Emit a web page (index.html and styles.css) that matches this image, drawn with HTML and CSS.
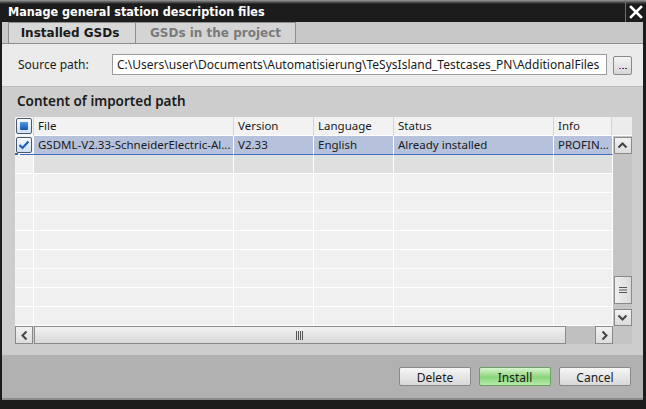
FILE: index.html
```html
<!DOCTYPE html>
<html>
<head>
<meta charset="utf-8">
<link rel="stylesheet" href="styles.css">
</head>
<body>
<div class="window">
  <div class="titlebar">
    <div class="title">Manage general station description files</div>
    <div class="close">
      <svg width="14" height="14" viewBox="0 0 14 14"><path d="M2 2L12 12M12 2L2 12" stroke="#fff" stroke-width="2.6" stroke-linecap="square"/></svg>
    </div>
  </div>
  <div class="body">
    <div class="tabs">
      <div class="tab active">Installed GSDs</div>
      <div class="tab">GSDs in the project</div>
    </div>
    <div class="source">
      <span class="label">Source path:</span>
      <div class="input">C:\Users\user\Documents\Automatisierung\TeSysIsland_Testcases_PN\AdditionalFiles</div>
      <div class="browse"><span class="dots"><i class="d1"></i><i class="d2"></i><i class="d3"></i></span></div>
    </div>
    <div class="panel">
      <div class="heading">Content of imported path</div>
      <div class="table">
        <div class="header">
          <div class="hcell cb">
            <svg class="check" width="16" height="16" viewBox="0 0 16 16">
              <defs><linearGradient id="bg1" x1="0" y1="0" x2="0" y2="1"><stop offset="0" stop-color="#f8fbff"/><stop offset="1" stop-color="#d0def0"/></linearGradient>
              <linearGradient id="fill1" x1="0" y1="0" x2="0" y2="1"><stop offset="0" stop-color="#4a9ae8"/><stop offset="1" stop-color="#1a56a8"/></linearGradient></defs>
              <rect x="0.5" y="0.5" width="15" height="15" rx="1.5" fill="url(#bg1)" stroke="#4a5a74"/>
              <rect x="4" y="4" width="8" height="8" rx="1" fill="url(#fill1)"/>
            </svg>
          </div>
          <div class="hcell">File</div>
          <div class="hcell">Version</div>
          <div class="hcell">Language</div>
          <div class="hcell">Status</div>
          <div class="hcell">Info</div>
          <div class="hcell last"></div>
        </div>
        <div class="main">
          <div class="rows">
            <div class="row selected">
              <div class="cell cb">
                <svg class="check" width="16" height="16" viewBox="0 0 16 16">
                  <rect x="0.5" y="0.5" width="15" height="15" rx="1.5" fill="url(#bg1)" stroke="#4a5a74"/>
                  <path d="M3.5 8L6.5 11L12.5 4.5" fill="none" stroke="#1f5fb8" stroke-width="2.2"/>
                </svg>
                <span class="focus"></span>
              </div>
              <div class="cell">GSDML-V2.33-SchneiderElectric-Al...</div>
              <div class="cell">V2.33</div>
              <div class="cell">English</div>
              <div class="cell">Already installed</div>
              <div class="cell">PROFIN...</div>
            </div>
            <div class="row dim"><div class="cell cb"></div><div class="cell"></div><div class="cell"></div><div class="cell"></div><div class="cell"></div><div class="cell"></div></div>
            <div class="row"><div class="cell cb"></div><div class="cell"></div><div class="cell"></div><div class="cell"></div><div class="cell"></div><div class="cell"></div></div>
            <div class="row"><div class="cell cb"></div><div class="cell"></div><div class="cell"></div><div class="cell"></div><div class="cell"></div><div class="cell"></div></div>
            <div class="row"><div class="cell cb"></div><div class="cell"></div><div class="cell"></div><div class="cell"></div><div class="cell"></div><div class="cell"></div></div>
            <div class="row"><div class="cell cb"></div><div class="cell"></div><div class="cell"></div><div class="cell"></div><div class="cell"></div><div class="cell"></div></div>
            <div class="row"><div class="cell cb"></div><div class="cell"></div><div class="cell"></div><div class="cell"></div><div class="cell"></div><div class="cell"></div></div>
            <div class="row"><div class="cell cb"></div><div class="cell"></div><div class="cell"></div><div class="cell"></div><div class="cell"></div><div class="cell"></div></div>
            <div class="row"><div class="cell cb"></div><div class="cell"></div><div class="cell"></div><div class="cell"></div><div class="cell"></div><div class="cell"></div></div>
            <div class="row"><div class="cell cb"></div><div class="cell"></div><div class="cell"></div><div class="cell"></div><div class="cell"></div><div class="cell"></div></div>
          </div>
          <div class="vscroll">
            <div class="sbtn up"><svg width="11" height="7" viewBox="0 0 11 7"><path d="M1.5 5.5L5.5 1.5L9.5 5.5" fill="none" stroke="#444" stroke-width="2"/></svg></div>
            <div class="vtrack"></div>
            <div class="vthumb"><svg width="10" height="8" viewBox="0 0 10 8"><path d="M1 1.5H9M1 4H9M1 6.5H9" stroke="#555" stroke-width="1"/></svg></div>
            <div class="vgap"></div>
            <div class="sbtn down"><svg width="11" height="7" viewBox="0 0 11 7"><path d="M1.5 1.5L5.5 5.5L9.5 1.5" fill="none" stroke="#444" stroke-width="2"/></svg></div>
          </div>
        </div>
        <div class="hscrollrow">
          <div class="hbtn"><svg width="7" height="11" viewBox="0 0 7 11"><path d="M5.5 1.5L1.5 5.5L5.5 9.5" fill="none" stroke="#444" stroke-width="2"/></svg></div>
          <div class="hthumb"><svg width="8" height="9" viewBox="0 0 8 9" shape-rendering="crispEdges"><path d="M0.5 0V9M2.5 0V9M4.5 0V9M6.5 0V9" stroke="#555" stroke-width="1"/></svg></div>
          <div class="htrack"></div>
          <div class="hbtn"><svg width="7" height="11" viewBox="0 0 7 11"><path d="M1.5 1.5L5.5 5.5L1.5 9.5" fill="none" stroke="#444" stroke-width="2"/></svg></div>
          <div class="corner"></div>
        </div>
      </div>
    </div>
    <div class="footer">
      <div class="btn">Delete</div>
      <div class="btn green">Install</div>
      <div class="btn">Cancel</div>
    </div>
  </div>
</div>
</body>
</html>
```
FILE: styles.css
```css
* { box-sizing: border-box; }
html, body { margin: 0; padding: 0; }
body { width: 646px; height: 409px; overflow: hidden; background: #1c1c1c; }
.window {
  width: 646px; height: 409px; background: #1c1c1c;
  display: flex; flex-direction: column;
  font-family: "Noto Sans", "Open Sans", sans-serif; font-size: 12px; color: #1a1a1a;
}
.titlebar {
  height: 22px; display: flex; align-items: stretch;
  background: linear-gradient(#9a9a9a 0px, #5a5a5a 2px, #1c1c1c 4px, #1c1c1c 100%);
}
.title {
  flex: 1; color: #fff; font-family: "DejaVu Sans Condensed", "DejaVu Sans", sans-serif; font-weight: bold; font-size: 12.5px;
  padding: 4px 0 0 8px;
}
.close {
  width: 21px; border-left: 1px solid #707070; display: flex; align-items: center; justify-content: center;
  padding-top: 2px;
}
.body {
  flex: 1; margin: 0 3px 9px 2px; display: flex; flex-direction: column;
  border-bottom: 2px solid #8c8c8c;
}
.tabs {
  height: 22px; background: #c8c8c8; display: flex; padding-left: 6px;
  border-bottom: 1px solid #8e8e8e;
}
.tab {
  height: 21px; padding: 3px 0 0 0; text-align: center;
  font-family: "DejaVu Sans", sans-serif; font-weight: bold; font-size: 12px; color: #7a7a7a;
  background: #d4d4d4; border: 1px solid #8e8e8e; border-bottom: none; border-left: none; width: 160px;
}
.tab.active {
  width: 128px; color: #1a1a1a; background: #d8d8d8; border-left: 1px solid #8e8e8e; padding-right: 4px;
}
.source {
  height: 42px; background: #ebebeb; display: flex; align-items: center; padding-left: 16px;
}
.label { width: 94px; margin-top: -2px; }
.input {
  width: 495px; height: 21px; background: #fff; border: 1px solid #9a9a9a; padding: 1px 0 0 4px;
  white-space: nowrap; overflow: hidden; margin-top: -2px;
}
.browse {
  width: 19px; height: 19px; margin-left: 6px; border: 1px solid #8a8a8a; border-radius: 2px;
  background: linear-gradient(#f4f4f4, #d6d6d6); display: flex; align-items: flex-end; justify-content: center; padding-bottom: 5px;
}
.dots { display: flex; gap: 1px; }
.dots i { width: 2px; height: 1px; display: block; }
.d1 { background: #c04040; } .d2 { background: #4040c0; } .d3 { background: #404040; }
.panel {
  height: 269px; background: #cdcdcd; padding: 5px 11px 0 13px; border-top: 1px solid #bdbdbd;
}
.heading { font-size: 13.5px; font-weight: 600; height: 25px; padding-left: 2px; color: #1a1a1a; }
.table { width: 617px; font-size: 11.5px; }
.header {
  display: grid; grid-template-columns: 19px 200px 80px 80px 160px 58px 20px; height: 19px;
}
.hcell {
  background: #f2f2f2; border-right: 1px solid #d4d4d4; border-bottom: 1px solid #ffffff;
  padding: 1px 0 0 4px; white-space: nowrap; overflow: hidden;
}
.hcell.cb { padding: 1px 0 0 1px; }
.hcell.last { border-right: none; background: #ececec; }
.main { display: flex; }
.rows { width: 598px; }
.row {
  display: grid; grid-template-columns: 19px 200px 80px 80px 160px 59px; height: 19px;
}
.cell {
  background: #f0f0f0; border-right: 1px solid #fff; border-bottom: 1px solid #fff;
  padding: 1px 0 0 4px; white-space: nowrap; overflow: hidden;
}
.cell.cb { padding: 1px 0 0 1px; position: relative; overflow: visible; }
.row.dim .cell { background: #dfdfdf; }
.row.dim .cell.cb { background: #f0f0f0; }
.row.selected .cell { background: #b6c2dc; border-bottom: 1px solid #3d6cc4; }
.row.selected .cell.cb { background: #f0f0f0; border-bottom: 1px solid #fff; }
.check { display: block; }
.focus { position: absolute; left: 0; bottom: -2px; width: 3px; height: 3px; background: #2f62c8; }
.row.selected .cell.cb::after {
  content: ""; position: absolute; left: 5px; right: -1px; bottom: -1px; height: 1px; background: #3d6cc4;
}
.vscroll {
  width: 19px; height: 190px; background: #c4c4c4; display: flex; flex-direction: column; align-items: center;
  padding-top: 1px;
}
.sbtn {
  width: 18px; height: 17px; border: 1px solid #8a8a8a; background: linear-gradient(#f2f2f2, #dcdcdc);
  display: flex; align-items: center; justify-content: center; flex: none;
}
.vtrack { height: 122px; flex: none; }
.vthumb {
  width: 18px; height: 28px; border: 1px solid #8a8a8a; background: linear-gradient(90deg, #f0f0f0, #dadada);
  display: flex; align-items: center; justify-content: center; flex: none;
}
.vgap { height: 5px; flex: none; }
.hscrollrow { display: flex; height: 18px; }
.hbtn {
  width: 18px; height: 18px; border: 1px solid #8a8a8a; background: linear-gradient(#f2f2f2, #dcdcdc);
  display: flex; align-items: center; justify-content: center; flex: none;
}
.hthumb {
  width: 532px; height: 18px; margin-left: 1px; border: 1px solid #8a8a8a; background: linear-gradient(#f2f2f2, #d8d8d8);
  display: flex; align-items: center; justify-content: center; flex: none;
}
.htrack { width: 29px; background: #c0c0c0; flex: none; }
.corner { width: 19px; background: #c4c4c4; flex: none; }
.footer {
  flex: 1; background: #b1b1b1; display: flex; justify-content: flex-end; align-items: flex-start;
  padding: 12px 12px 0 0; gap: 8px;
}
.btn {
  width: 72px; height: 19px; border: 1px solid #8a8a8a; border-radius: 2px;
  background: linear-gradient(#f6f6f6, #d8d8d8); text-align: center; padding-top: 1px; font-size: 12px;
}
.btn.green { background: linear-gradient(#d8f5d0, #8ad57a 55%, #b6ecab); border-color: #6aa060; }
```
